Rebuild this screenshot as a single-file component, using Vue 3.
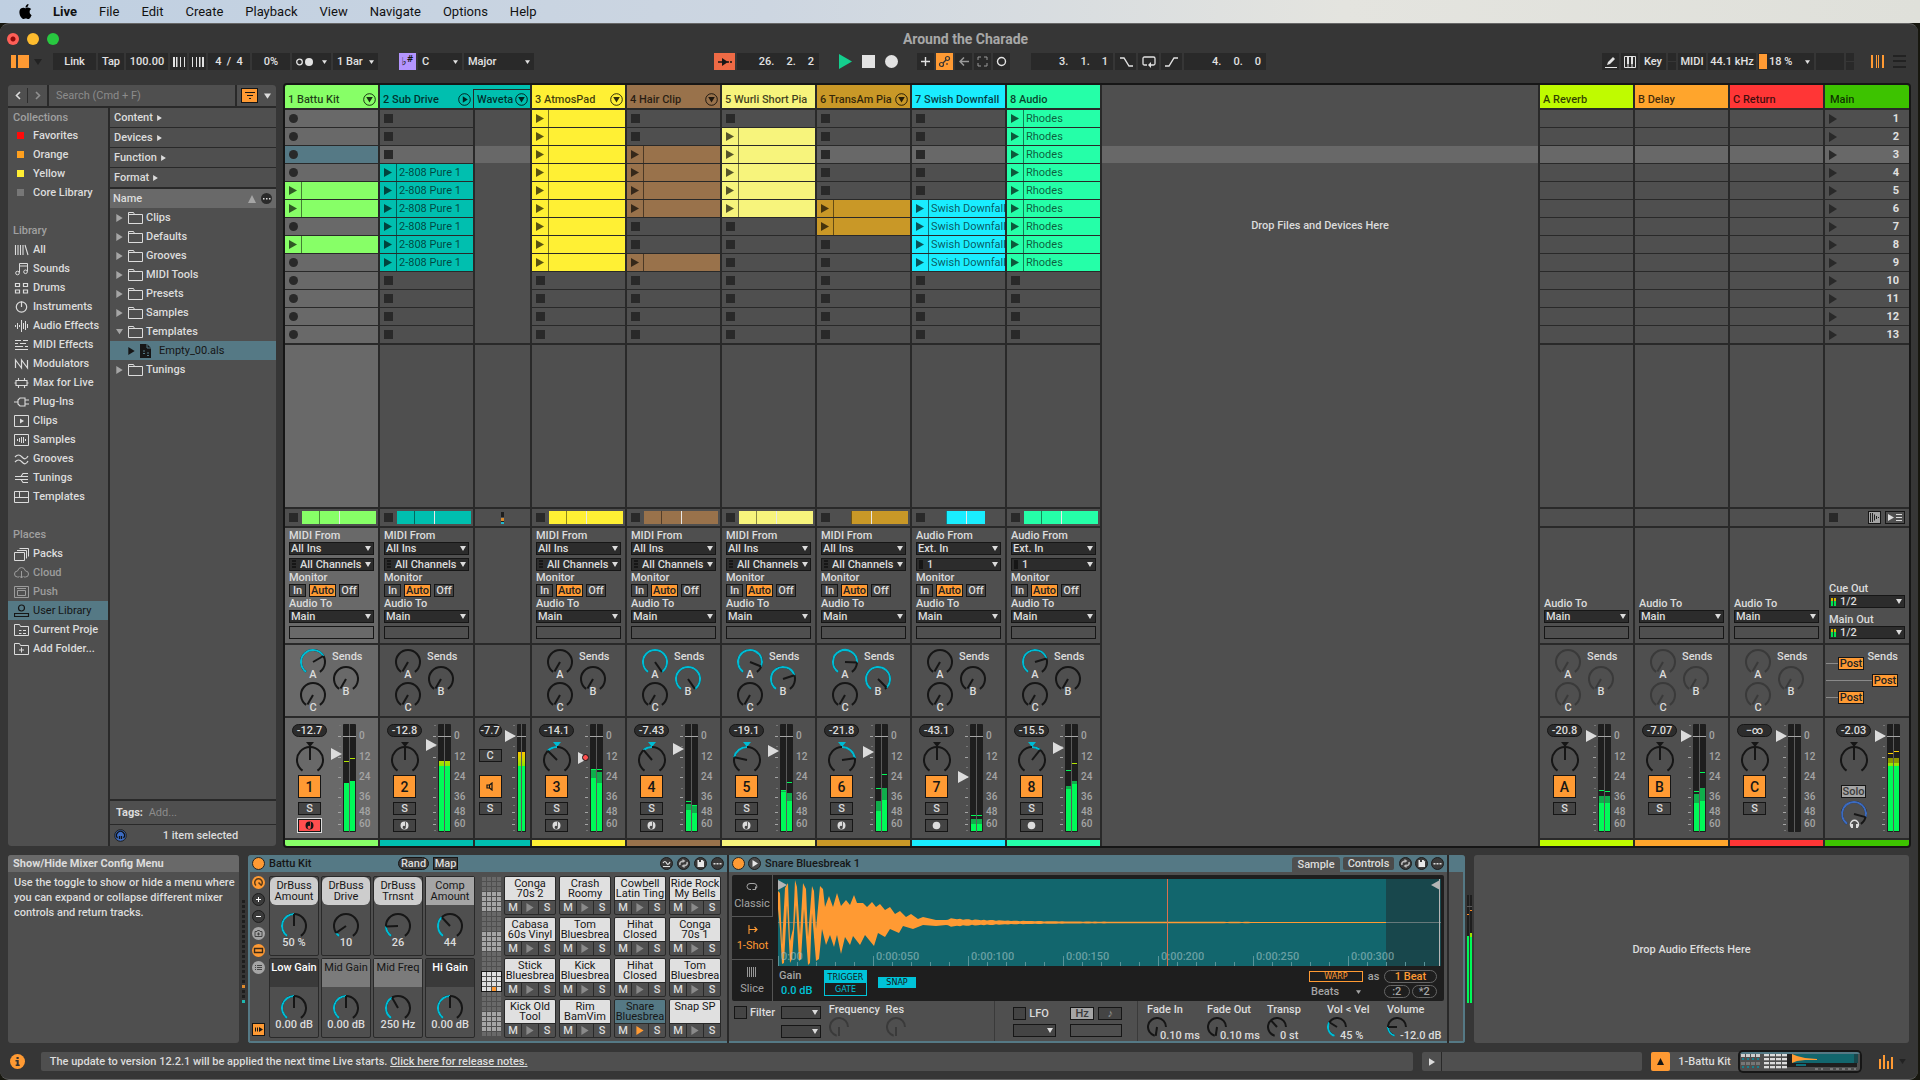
<template>
  <div class="screen">
    <svg class="defs" width="0" height="0" aria-hidden="true">
      <defs>
        <linearGradient id="hot" gradientUnits="userSpaceOnUse" x1="0" y1="43" x2="0" y2="28">
          <stop offset="0" stop-color="#7fe800" />
          <stop offset="0.5" stop-color="#c8d800" />
          <stop offset="1" stop-color="#ffc400" />
        </linearGradient>
      </defs>
    </svg>

    <nav class="menubar">
      <svg class="apple" viewBox="0 0 24 24">
        <path
          d="M12.152 6.896c-.948 0-2.415-1.078-3.96-1.04-2.04.027-3.91 1.183-4.961 3.014-2.117 3.675-.546 9.103 1.519 12.09 1.013 1.454 2.208 3.09 3.792 3.039 1.52-.065 2.09-.987 3.935-.987 1.831 0 2.35.987 3.96.948 1.637-.026 2.676-1.48 3.676-2.948 1.156-1.688 1.636-3.325 1.662-3.415-.039-.013-3.182-1.221-3.22-4.857-.026-3.04 2.48-4.494 2.597-4.559-1.429-2.09-3.623-2.324-4.39-2.376-2-.156-3.675 1.09-4.61 1.09zM15.53 3.83c.843-1.012 1.4-2.427 1.245-3.83-1.207.052-2.662.805-3.532 1.818-.78.896-1.454 2.338-1.273 3.714 1.338.104 2.715-.688 3.559-1.701"
        />
      </svg>
      <a v-for="m in menus" :key="m" href="#" :class="{ app: m === 'Live' }">{{ m }}</a>
    </nav>

    <div class="window">
      <header class="titlebar">
        <div class="lights">
          <button class="light close" aria-label="Close"></button>
          <button class="light min" aria-label="Minimize"></button>
          <button class="light max" aria-label="Zoom"></button>
        </div>
        <h1>Around the Charade</h1>
      </header>

      <!-- transport -->
      <div class="toolbar">
        <div class="tools">
          <button class="bare views" aria-label="Browser"><Icon name="browser" :w="18" :h="14" /></button>
          <button class="bare viewcaret" aria-label="View options"><Icon name="caret" :w="8" :h="6" /></button>
          <button class="cell w43">Link</button>
          <button class="cell w26">Tap</button>
          <button class="cell w42">100.00</button>
          <button class="cell w17" aria-label="Nudge down"><Icon name="nudgeDown" :w="12" :h="10" /></button>
          <button class="cell w17" aria-label="Nudge up"><Icon name="nudgeUp" :w="12" :h="10" /></button>
          <button class="cell w42">4 &nbsp;/ &nbsp;4</button>
          <button class="cell w38">0%</button>
          <button class="cell w39 spread" aria-label="Metronome">
            <Icon name="metro" :w="17" :h="8" /><Icon name="caret" :w="5" :h="4" />
          </button>
          <button class="cell w45 spread">1 Bar <Icon name="caret" :w="5" :h="4" /></button>
          <button class="cell w17 purple" aria-label="Scale mode">♭<sup>#</sup></button>
          <button class="cell w44 spread">C <Icon name="caret" :w="5" :h="4" /></button>
          <button class="cell w70 spread">Major <Icon name="caret" :w="5" :h="4" /></button>
        </div>
        <div class="tools mid">
          <button class="cell w21 follow" aria-label="Follow"><Icon name="follow" :w="16" :h="10" /></button>
          <button class="cell w82 pos"><span>26.</span><span>2.</span><span>2</span></button>
          <div class="transport">
            <button class="bare play" aria-label="Play"><Icon name="play" :w="13" :h="15" /></button>
            <button class="bare" aria-label="Stop"><Icon name="stop" :w="13" :h="13" /></button>
            <button class="bare" aria-label="Record"><Icon name="rec" :w="13" :h="13" /></button>
          </div>
          <button class="cell w17" aria-label="Overdub"><Icon name="plus" :w="11" :h="11" /></button>
          <button class="cell w17 orange" aria-label="Automation arm"><Icon name="auto" :w="13" :h="13" /></button>
          <button class="cell w17 dim" aria-label="Re-enable automation"><Icon name="back" :w="10" :h="9" /></button>
          <button class="cell w17 dim" aria-label="Capture"><Icon name="capture" :w="11" :h="11" /></button>
          <button class="cell w17" aria-label="Session record"><Icon name="ring" :w="11" :h="11" /></button>
          <button class="cell w82 pos gap"><span>3.</span><span>1.</span><span>1</span></button>
          <button class="cell w21" aria-label="Punch in"><Icon name="punchIn" :w="14" :h="10" /></button>
          <button class="cell w21" aria-label="Loop"><Icon name="loop" :w="14" :h="12" /></button>
          <button class="cell w21" aria-label="Punch out"><Icon name="punchOut" :w="14" :h="10" /></button>
          <button class="cell w82 pos"><span>4.</span><span>0.</span><span>0</span></button>
        </div>
        <div class="tools">
          <button class="cell w17" aria-label="Draw"><Icon name="pencil" :w="12" :h="12" /></button>
          <button class="cell w17" aria-label="MIDI keyboard"><Icon name="piano" :w="12" :h="12" /></button>
          <button class="cell w26">Key</button>
          <span class="leds"><i></i><i></i></span>
          <button class="cell w28">MIDI</button>
          <button class="cell w48">44.1 kHz</button>
          <button class="cell w56 cpu"><i></i>18 % <Icon name="caret" :w="5" :h="4" /></button>
          <span class="cell w28"></span>
          <span class="leds"><i></i><i></i></span>
          <button class="bare arr" aria-label="Session view"><Icon name="session" :w="13" :h="13" /></button>
          <button class="bare lines" aria-label="Arrangement view"><Icon name="lines" :w="13" :h="13" /></button>
        </div>
      </div>

      <main class="main">
        <!-- browser -->
        <aside class="browser">
          <div class="search">
            <div class="hist">
              <button aria-label="Back"><Icon name="left" :w="6" :h="9" /></button>
              <button class="off" aria-label="Forward"><Icon name="right" :w="6" :h="9" /></button>
            </div>
            <input type="text" v-model="query" placeholder="Search (Cmd + F)" aria-label="Search" />
            <div class="filter">
              <button class="funnel" aria-label="Filter"><Icon name="funnel" :w="10" :h="7" /></button>
              <button class="bare" aria-label="Filter menu"><Icon name="caret" :w="7" :h="6" /></button>
            </div>
          </div>
          <div class="panes">
            <ul class="side">
              <template v-for="group in sidebar" :key="group.title">
                <li class="group">{{ group.title }}</li>
                <li
                  v-for="it in group.items"
                  :key="it.name"
                  :class="{ active: it.active, faded: it.off }"
                >
                  <span v-if="it.color" class="swatch"><i :style="{ background: it.color }"></i></span>
                  <Icon v-else :name="it.icon" :w="16" :h="14" />
                  {{ it.name }}
                </li>
              </template>
            </ul>
            <div class="files">
              <button v-for="f in ['Content', 'Devices', 'Function', 'Format']" :key="f" class="facet">
                {{ f }} <Icon name="tri" :w="5" :h="6" />
              </button>
              <div class="namebar">
                <span>Name</span>
                <Icon class="sort" name="up" :w="8" :h="8" />
                <Icon name="dots" :w="11" :h="11" />
              </div>
              <ul class="tree">
                <li v-for="n in tree" :key="n.name" :class="{ file: n.file }">
                  <Icon class="arrow" :name="n.open ? 'caret' : 'tri'" :w="7" :h="n.open ? 7 : 8" />
                  <Icon :name="n.file ? 'als' : 'folder'" :w="16" :h="14" />
                  <span>{{ n.name }}</span>
                </li>
              </ul>
              <div class="tags"><b>Tags:</b> Add...</div>
              <div class="count">
                <Icon name="preview" :w="13" :h="13" />
                <span>1 item selected</span>
              </div>
            </div>
          </div>
        </aside>

        <!-- session grid and mixer -->
        <section class="session">
          <template v-for="c in columns" :key="c.name">
            <div v-if="c.kind === 'drop'" class="drop">
              <i class="scene"></i>
              <span>Drop Files and Devices Here</span>
            </div>
            <div v-else class="track" :class="[c.kind, { selected: c.selected }]">
              <div class="head" :style="{ background: c.color }">
                <span>{{ c.name }}</span>
                <Icon v-if="c.fold" :name="c.fold" :w="13" :h="13" />
              </div>
              <div class="slots">
                <template v-if="c.kind === 'track'">
                  <button
                    v-for="(s, i) in c.slots"
                    :key="i"
                    class="slot"
                    :class="{ lit: i === 2, cursor: c.selected && i === 2, clip: s === 'c' }"
                    :style="s === 'c' ? { background: c.color } : null"
                    :aria-label="'Slot ' + (i + 1)"
                  >
                    <span class="ico"><Icon :name="slotIcons[s]" :w="9" :h="9" /></span>
                    <span v-if="s === 'c'" class="label">{{ c.clip }}</span>
                  </button>
                </template>
                <i v-else-if="c.kind === 'chain'" class="scene"></i>
                <template v-else>
                  <div v-for="i in 13" :key="i" class="slot" :class="{ lit: i === 3 }">
                    <template v-if="c.kind === 'master'">
                      <span class="ico dark"><Icon name="tri" :w="8" :h="10" /></span>
                      <b>{{ i }}</b>
                    </template>
                  </div>
                </template>
              </div>
              <div class="blank"></div>
              <div class="status">
                <template v-if="c.kind === 'track'">
                  <i class="sq"></i>
                  <span class="clipview">
                    <span :style="{ background: c.color, left: c.view[0] + 'px', width: c.view[1] + 'px' }"></span>
                    <i class="start" :style="{ left: c.view[2] + 'px' }"></i>
                    <i class="now"></i>
                  </span>
                </template>
                <Icon v-else-if="c.kind === 'chain'" class="mini" name="miniDots" :w="3" :h="12" />
                <template v-else-if="c.kind === 'master'">
                  <i class="sq"></i>
                  <button class="tiny grey" aria-label="Back to arrangement"><Icon name="toArr" :w="9" :h="9" /></button>
                  <button class="tiny wide" aria-label="Scene follow"><Icon name="sceneFollow" :w="14" :h="7" /></button>
                </template>
              </div>

              <div class="io">
                <template v-if="c.kind === 'track'">
                  <p>{{ c.audio ? 'Audio From' : 'MIDI From' }}</p>
                  <span class="sel">
                    <select :aria-label="c.name + ' input'"><option>{{ c.audio ? 'Ext. In' : 'All Ins' }}</option></select>
                  </span>
                  <span class="sel sub" :class="{ mono: c.audio }">
                    <select :aria-label="c.name + ' channel'"><option>{{ c.audio ? '1' : 'All Channels' }}</option></select>
                  </span>
                  <p>Monitor</p>
                  <div class="mon">
                    <button>In</button><button class="on">Auto</button><button>Off</button>
                  </div>
                </template>
                <template v-if="c.kind === 'track' || c.kind === 'return'">
                  <p>Audio To</p>
                  <span class="sel">
                    <select :aria-label="c.name + ' output'"><option>Main</option></select>
                  </span>
                  <span class="box"></span>
                </template>
                <template v-if="c.kind === 'master'">
                  <p>Cue Out</p>
                  <span class="sel out"><select aria-label="Cue out"><option>1/2</option></select></span>
                  <p class="second">Main Out</p>
                  <span class="sel out"><select aria-label="Main out"><option>1/2</option></select></span>
                </template>
              </div>

              <div class="sends">
                <template v-if="c.sends">
                  <div>
                    <div class="send"><Knob v-bind="sendKnob(c, 0)" /><span>A</span></div>
                    <div class="send"><Knob v-bind="sendKnob(c, 2)" /><span>C</span></div>
                  </div>
                  <div>
                    <p>Sends</p>
                    <div class="send"><Knob v-bind="sendKnob(c, 1)" /><span>B</span></div>
                  </div>
                </template>
                <template v-if="c.kind === 'master'">
                  <p>Sends</p>
                  <div class="post"><i></i><button>Post</button></div>
                  <div class="post far"><i></i><button>Post</button></div>
                  <div class="post"><i></i><button>Post</button></div>
                </template>
              </div>

              <div class="mixer">
                <div class="strip">
                  <span class="db">{{ c.db }}</span>
                  <template v-if="c.kind === 'chain'">
                    <button class="sm pan">C</button>
                    <button class="num" aria-label="Chain activator"><Icon name="speaker" :w="8" :h="9" /></button>
                  </template>
                  <template v-else>
                    <svg class="pan-knob" width="28" height="34" viewBox="0 -6 28 34">
                      <path d="M10 -4h8l-4 5z" :fill="c.pan ? '#00bcd4' : '#161616'" />
                      <path :d="arc(-145, 145, 13)" fill="none" stroke="#161616" stroke-width="2" />
                      <path
                        v-if="c.pan"
                        :d="arc(Math.min(0, c.pan), Math.max(0, c.pan), 13)"
                        fill="none"
                        stroke="#00bcd4"
                        stroke-width="2"
                      />
                      <path :d="pointer(c.pan, 13)" stroke="#161616" stroke-width="2" />
                    </svg>
                    <button v-if="c.num" class="num">{{ c.num }}</button>
                  </template>
                  <template v-if="c.kind === 'master'">
                    <button class="solo">Solo</button>
                    <div class="cue">
                      <Knob :angle="105" color="#3c6bc0" />
                      <Icon name="phones" :w="11" :h="11" />
                    </div>
                  </template>
                  <button v-else class="sm">S</button>
                  <button v-if="c.kind === 'track'" class="sm arm" :class="{ armed: c.selected }" aria-label="Arm">
                    <Icon :name="c.audio ? 'armAudio' : 'armMidi'" :w="9" :h="9" />
                  </button>
                </div>
                <div class="fader">
                  <svg width="16" height="108" viewBox="0 0 16 108">
                    <rect
                      v-for="t in ticks"
                      :key="t"
                      :x="scaleMarks[t] ? 11 : 12"
                      :y="t"
                      :width="scaleMarks[t] ? 3 : 2"
                      height="1"
                      :fill="scaleMarks[t] ? '#a5a5a5' : '#777'"
                    />
                  </svg>
                  <i class="thumb" :style="{ top: c.fader - 6 + 'px' }"></i>
                  <i v-if="c.dot" class="dot" :style="{ top: c.fader - 4 + 'px' }"></i>
                </div>
                <svg
                  class="meter"
                  :width="c.kind === 'chain' ? 9 : 13"
                  height="108"
                  :viewBox="c.kind === 'chain' ? '0 0 9 108' : '0 0 13 108'"
                >
                  <rect width="13" height="108" rx="1" fill="#1e1e1e" />
                  <g
                    v-for="(m, i) in c.meter"
                    :key="i"
                    :transform="`translate(${i ? (c.kind === 'chain' ? 5 : 7) : 1} 0)`"
                  >
                    <rect :y="107 - m[1]" :width="barW(c)" :height="m[1]" :fill="m[1] > 65 ? '#8c9600' : '#0fae4b'" />
                    <rect :y="107 - m[0]" :width="barW(c)" :height="m[0]" :fill="m[0] > 65 ? 'url(#hot)' : '#00fa58'" />
                    <rect v-if="m[0] > 65" y="42" :width="barW(c)" height="65" fill="#00fa58" />
                    <rect v-if="m[2]" :y="107 - m[2]" :width="barW(c)" height="1" :fill="peakColor(m[2])" />
                  </g>
                  <rect :x="c.kind === 'chain' ? 4 : 6" width="1" height="108" fill="#5a5a5a" />
                  <rect y="12" width="13" height="1" fill="#a5a5a5" />
                </svg>
                <div v-if="c.kind !== 'chain' && c.kind !== 'master'" class="scale">
                  <span v-for="(label, y) in scaleMarks" :key="y" :style="{ top: y - 6 + 'px' }">{{ label }}</span>
                </div>
              </div>
              <div class="foot" :style="{ background: c.color }"></div>
            </div>
          </template>
        </section>
      </main>

      <!-- detail view -->
      <section class="detail">
        <article class="help">
          <h2>Show/Hide Mixer Config Menu</h2>
          <p>
            Use the toggle to show or hide a menu where<br />you can expand or collapse different mixer<br />controls
            and return tracks.
          </p>
        </article>

        <div class="midi-in">
          <i v-for="n in 21" :key="n" :class="{ o: n === 18, c: n === 21 }"></i>
        </div>

        <div class="chain-view">
          <div class="device rack">
            <header>
              <i class="power"></i>
              <h3>Battu Kit</h3>
              <button class="rand">Rand</button>
              <button class="map">Map</button>
              <div class="round">
                <Icon v-for="n in ['wave', 'swap', 'save', 'dots2']" :key="n" :name="n" :w="13" :h="13" />
              </div>
            </header>
            <div class="rack-body">
              <div class="rack-side">
                <Icon v-for="n in ['macro', 'addc', 'subc', 'cam', 'rackOn', 'list']" :key="n" :name="n" :w="13" :h="13" />
                <Icon class="last" name="autoSel" :w="13" :h="13" />
              </div>
              <div class="macros">
                <div v-for="m in macros" :key="m.name" class="macro">
                  <div class="mname" :class="m.tone"><span>{{ m.name }}</span></div>
                  <Knob :angle="m.angle" />
                  <span class="mval">{{ m.val }}</span>
                </div>
              </div>
              <div class="overview">
                <i v-for="n in 128" :key="n" :class="overviewClass(n - 1)"></i>
                <span class="frame"></span>
              </div>
              <div class="pads">
                <div v-for="(p, i) in pads" :key="i" class="pad" :class="{ active: i === 14 }">
                  <div class="pname">{{ p }}</div>
                  <div class="pbtns">
                    <button>M</button>
                    <button class="pp" aria-label="Preview"><Icon name="tri" :w="8" :h="9" /></button>
                    <button>S</button>
                  </div>
                </div>
              </div>
            </div>
          </div>

          <div class="device simpler">
            <header>
              <i class="power"></i>
              <Icon name="playc" :w="13" :h="13" />
              <h3>Snare Bluesbreak 1</h3>
              <button class="tab on">Sample</button>
              <button class="tab">Controls</button>
              <div class="round">
                <Icon v-for="n in ['swap', 'save', 'dots2']" :key="n" :name="n" :w="13" :h="13" />
              </div>
            </header>
            <div class="sampler">
              <div class="modes">
                <button><Icon name="classic" :w="12" :h="12" />Classic</button>
                <button class="on"><Icon name="shot" :w="12" :h="12" />1-Shot</button>
                <button><Icon name="slice" :w="12" :h="12" />Slice</button>
              </div>
              <div class="sample">
                <svg class="waveform" width="663" height="87" viewBox="0 0 663 87">
                  <rect width="663" height="87" fill="#12666d" />
                  <rect x="608" width="55" height="87" fill="#18474c" />
                  <rect y="43" width="663" height="1" fill="#66797b" />
                  <path :d="wave" fill="#ff9a33" />
                  <g v-for="(t, i) in times" :key="t">
                    <rect :x="i * 95" y="77" width="1" height="10" fill="#5a9499" />
                    <rect v-for="k in 4" :key="k" :x="i * 95 + k * 19" y="83" width="1" height="4" fill="#5a9499" />
                    <text :x="i * 95 + 3" y="81">{{ t }}</text>
                  </g>
                  <path d="M0 1l9 5-9 5z" fill="#b5b5b5" />
                  <path d="M662 1l-9 5 9 5z" fill="#b5b5b5" />
                  <rect x="661" width="1" height="87" fill="#b5b5b5" />
                  <rect x="389" width="1" height="87" fill="#d8704e" />
                </svg>
                <div class="controls">
                  <div class="gain"><span>Gain</span><b>0.0 dB</b></div>
                  <div class="trig"><button class="on">TRIGGER</button><button>GATE</button></div>
                  <button class="snap">SNAP</button>
                  <div class="warp">
                    <button class="wbtn">WARP</button><span>as</span><button class="pill beat">1 Beat</button>
                    <span class="beats">Beats <Icon name="caret" :w="5" :h="4" /></span>
                    <span class="halves"><button class="pill">:2</button><button class="pill">*2</button></span>
                  </div>
                </div>
              </div>
            </div>
            <div class="params">
              <div class="pair filt">
                <label><input type="checkbox" v-model="filterOn" />Filter</label>
              </div>
              <div class="pair selects">
                <span class="sel"><select aria-label="Filter type"><option></option></select></span>
                <span class="sel"><select aria-label="Filter slope"><option></option></select></span>
              </div>
              <div class="param freq"><span>Frequency</span><SmallKnob :angle="-180" :dim="true" /></div>
              <div class="param res"><span>Res</span><SmallKnob :angle="-180" :dim="true" /></div>
              <div class="pair lfo">
                <label><input type="checkbox" v-model="lfoOn" />LFO</label>
                <span class="sel"><select aria-label="LFO shape"><option></option></select></span>
              </div>
              <div class="pair rate">
                <div><button class="hz">Hz</button><button class="note">♪</button></div>
                <span class="box"></span>
              </div>
              <div class="ends">
                <div v-for="p in params" :key="p.name" class="param">
                  <span>{{ p.name }}</span>
                  <div><SmallKnob :angle="p.angle" :fill="p.fill" /><b>{{ p.val }}</b></div>
                </div>
              </div>
            </div>
          </div>

          <div class="device tail"><header></header></div>
        </div>

        <svg class="out-meter" width="5" height="108" viewBox="0 0 5 108">
          <path d="M0 0h2v108h-2zM3 0h2v108h-2z" fill="#1e1e1e" />
          <path d="M0 41h2v67h-2zM3 38h2v70h-2z" fill="#00fa58" />
          <path d="M3 38h2v4h-2z" fill="#9be000" />
          <path d="M0 19h2v1h-2zM3 15h2v1h-2z" fill="#ff8a1f" />
          <path d="M0 11h5v1h-5z" fill="#5a5a5a" />
        </svg>

        <div class="fxdrop">Drop Audio Effects Here</div>
      </section>

      <footer class="statusbar">
        <Icon name="info" :w="15" :h="15" />
        <div class="msg">
          The update to version 12.2.1 will be applied the next time Live starts. <a href="#">Click here for release notes.</a>
        </div>
        <div class="clipbar">
          <button aria-label="Show clip view"><Icon name="tri" :w="6" :h="8" /></button>
          <span></span>
        </div>
        <div class="devbar">
          <button aria-label="Show device view"><Icon name="up" :w="7" :h="7" /></button>
          <span>1-Battu Kit</span>
          <svg class="thumbnail" width="124" height="23" viewBox="0 0 124 23">
            <rect x="1" y="1" width="122" height="21" rx="4" fill="#4f4f4f" />
            <rect x="2" y="2" width="120" height="2" fill="#557985" />
            <g v-for="r in 2" :key="r">
              <template v-for="k in 4" :key="k">
                <rect :x="k * 5 - 2" :y="r * 8 - 4" width="4" height="3" :fill="r === 1 ? '#cdcdcd' : '#777'" />
                <rect :x="k * 5 - 1" :y="r * 8" width="2" height="2" fill="#1b7f8c" />
              </template>
            </g>
            <g v-for="r in 4" :key="'p' + r">
              <template v-for="k in 4" :key="k">
                <rect :x="k * 6 + 20" :y="r * 4" width="5" height="2" fill="#dcdcdc" />
                <rect :x="k * 6 + 20" :y="r * 4 + 2" width="5" height="1" fill="#777" />
              </template>
            </g>
            <rect x="49" y="4" width="70" height="13" fill="#1e1e1e" />
            <rect x="54" y="4" width="62" height="9" fill="#12666d" />
            <rect x="116" y="4" width="4" height="9" fill="#18474c" />
            <path d="M54 4l5 2 8 2 12 1v1l-12 0-8 1-5 2z" fill="#ff9a33" />
            <path d="M58 15h10" stroke="#00bcd4" />
            <path d="M77 19h8M92 19h26" stroke="#a5a5a5" stroke-dasharray="3 3" />
            <rect x="1" y="1" width="122" height="21" rx="4" fill="none" stroke="#161616" stroke-width="2" />
          </svg>
        </div>
        <button class="bare mixbtn" aria-label="Mixer"><Icon name="bars" :w="15" :h="14" /></button>
        <button class="bare mixcaret" aria-label="Mixer config"><Icon name="caret" :w="7" :h="5" /></button>
      </footer>
    </div>
  </div>
</template>

<script setup>
import { h, ref } from 'vue';

const query = ref('');
const filterOn = ref(false);
const lfoOn = ref(false);

const menus = ['Live', 'File', 'Edit', 'Create', 'Playback', 'View', 'Navigate', 'Options', 'Help'];

// [viewBox, markup]; s() draws currentColor strokes, f() fills
const s = (d, w = 1) => `<path d="${d}" fill="none" stroke="currentColor" stroke-width="${w}"/>`;
const f = (d, c = 'currentColor') => `<path d="${d}" fill="${c}" fill-rule="evenodd"/>`;
const disc = (c, ring = '#1e1e1e') => `<circle cx="6.5" cy="6.5" r="6" fill="${c}" stroke="${ring}"/>`;
const o = (cx, cy, r, w = 1) => `<circle cx="${cx}" cy="${cy}" r="${r}" fill="none" stroke="currentColor" stroke-width="${w}"/>`;

const glyphs = {
  browser: ['0 0 18 14', f('M0 0h5v13H0zM7 0h11v13H7z')],
  caret: ['0 0 8 6', f('M0 0h8L4 6z')],
  up: ['0 0 8 8', f('M0 8h8L4 0z')],
  tri: ['0 0 8 10', f('M0 0l8 5-8 5z')],
  left: ['0 0 6 9', s('M5 1L1.5 4.5 5 8', 1.6)],
  right: ['0 0 6 9', s('M1 1l3.5 3.5L1 8', 1.6)],
  nudgeDown: ['0 0 12 10', f('M0 0h2v10H0zM3 0h1.500v10H3zM7 0h1v10H7zM11 0h1v10h-1z')],
  nudgeUp: ['0 0 12 10', f('M0 0h1v10H0zM4 0h1v10H4zM7 0h1.500v10H7zM10 0h2v10h-2z')],
  metro: ['0 0 17 8', o(3.5, 4, 2.8, 1.3) + '<circle cx="13" cy="4" r="4" fill="currentColor"/>'],
  follow: ['0 0 16 10', f('M5 1l6 4-6 4z') + s('M1 5h5M10 5h2M13 5h2', 1.4)],
  play: ['0 0 13 15', f('M0 0l13 7.5L0 15z')],
  stop: ['0 0 13 13', f('M0 0h13v13H0z')],
  rec: ['0 0 13 13', '<circle cx="6.5" cy="6.5" r="6.5" fill="currentColor"/>'],
  plus: ['0 0 11 11', s('M5.5 1v9M1 5.5h9', 1.4)],
  auto: ['0 0 13 13', o(3.5, 9.5, 2, 1.2) + o(9.5, 3.5, 2, 1.2) + o(9, 9, 0.5) + s('M5 8l3-3', 1.2)],
  back: ['0 0 10 9', s('M1 4.500h9M5 0.500l-4 4 4 4', 1.5)],
  capture: ['0 0 11 11', s('M1 4V1h3M7 1h3v3M10 7v3H7M4 10H1V7')],
  ring: ['0 0 11 11', o(5.5, 5.5, 4, 1.4)],
  punchIn: ['0 0 14 10', s('M1 1h4l5 8h4', 1.4)],
  punchOut: ['0 0 14 10', s('M0 9h4l5-8h4', 1.4)],
  loop: ['0 0 14 12', s('M5 9H2.5Q1 9 1 7.5v-5Q1 1 2.5 1h9Q13 1 13 2.5v5Q13 9 11.5 9H8', 1.3) + f('M6 9l3-3v6z')],
  pencil: ['0 0 12 12', f('M2 9l1-3 5-5 2 2-5 5zM0 11h12v1H0z')],
  piano: ['0 0 12 12', s('M0.5 0.5h11v11h-11zM4 7v4M8 7v4') + f('M3 0h2v8H3zM7 0h2v8H7z')],
  session: ['0 0 13 13', f('M0 0h2v13H0zM5 0h1v13H5zM7 0h1v13H7zM11 0h2v13h-2z')],
  lines: ['0 0 13 13', f('M0 0h13v2H0zM0 5h13v2H0zM0 11h13v2H0z')],
  funnel: ['0 0 10 7', f('M0 0h10v1H0zM2 3h6v1H2zM4 6h2v1H4z')],
  // sidebar
  all: ['0 0 16 14', s('M1.5 2v10M4 2v10M6.5 2v10M9 2v10M11 2l3 10', 1.1)],
  sounds: ['0 0 16 14', s('M5.5 10.500V1.500h8v8M5.500 4h8') + o(3.5, 11, 1.8) + o(11.5, 9.8, 1.8)],
  drums: ['0 0 16 14', s('M1.5 2.500h4v3h-4zM9.500 2.500h4v3h-4zM1.500 9h4v3h-4zM9.500 9h4v3h-4z', 1.2)],
  instruments: ['0 0 16 14', o(7.5, 7, 5.2, 1.2) + s('M7.5 1.500V7', 1.2)],
  audiofx: ['0 0 16 14', s('M1.5 6v2M3.5 4v6M5.5 6v2M7.5 1v12M9.5 4v6M11.5 2v9M13.5 5v4')],
  midifx: ['0 0 16 14', s('M1 2.5h6M9 2.5h5M1 5.5h3M6 5.5h6M1 8.5h8M11 8.5h3M1 11.5h13', 1.2)],
  modulators: ['0 0 16 14', s('M1.5 11V3l6 8V3l6 8V3', 1.2)],
  max: ['0 0 16 14', s('M2 4.5h11v5H2zM4.5 2v2.5M10.5 2v2.5M4.5 9.5V12M10.5 9.5V12M0.5 7H2M13 7h1.5', 1.1)],
  plug: ['0 0 16 14', s('M0 7h4M6 3h5v8H6L4 9V5zM11 5h4M11 9h4', 1.1)],
  clips: ['0 0 16 14', s('M0.5 1.5h14v11h-14z') + f('M6 4.5l4 2.5-4 2.5z')],
  samples: ['0 0 16 14', s('M0.5 1.5h14v11h-14zM3.5 6v2M5.5 5v4M7.5 4v6M9.5 4v6M11.5 6v2')],
  grooves: ['0 0 16 14', s('M1 5q3.5-4 7 0t6-1M1 10q3.5-4 7 0t6-1', 1.2)],
  tunings: ['0 0 16 14', s('M14 2.5H9L7 5.5H1M14 5.5H7M14 8.5H7M14 11.5H9l-2-3H1', 1.1)],
  templates: ['0 0 16 14', s('M0.5 1.5h14v11h-14zM5.5 1.5v6M0.5 7.5h14')],
  packs: ['0 0 16 14', s('M0.5 5.5h10v8h-10zM3 3.5h9.5v8M5.5 1.5h9v8')],
  cloud: ['0 0 16 14', s('M5 11H3.500a3 3 0 010-6q1-3.500 4-3.500T11.500 5a3 3 0 010 6H10M7.500 5v7M5.500 10l2 2 2-2')],
  push: ['0 0 16 14', s('M0.5 1.5h14v11h-14zM3 3.5h9M3.5 5.5h8v5h-8z')],
  user: ['0 0 16 14', o(7.5, 4, 3, 1.2) + s('M0.5 12.5V9.5h14v3z', 1.2)],
  project: ['0 0 16 14', s('M0.5 12.5v-11h5l1 2h8v9zM5 7.500h2.500M9 7.500h3M5 10.500h2.500M9 10.500h3')],
  addfolder: ['0 0 16 14', s('M0.5 12.5v-11h5l1 2h8v9zM7.5 5.5v5M5 8h5')],
  folder: ['0 0 16 14', s('M0.5 12.5v-11h5l1 2h8v9zM1 3.5h6')],
  als: ['0 0 16 14', f('M2 0h7l4 4v10H2z') + '<path d="M9 0v4h4M5 7h2M5 9.5h2M9 9h2M9 11.5h2" fill="none" stroke="#557985"/>'],
  dots: ['0 0 11 11', '<circle cx="5.5" cy="5.5" r="5.5" fill="#2a2a2a"/><path d="M2 5h1.500v1.500H2zM5 5h1.500v1.500H5zM8 5h1.500v1.500H8z" fill="#ddd"/>'],
  preview: ['0 0 13 13', '<circle cx="6.5" cy="6.5" r="5.8" fill="#3c6bc0" stroke="#1e1e1e"/><path d="M3.5 9a4 4 0 116 0M5.500 7v3M7.500 7v3" fill="none" stroke="#111" stroke-width="1.3"/>'],
  // session
  foldDown: ['0 0 13 13', o(6.5, 6.5, 5.8) + f('M3.2 4h6.600L6.500 9.500z')],
  foldRight: ['0 0 13 13', o(6.5, 6.5, 5.8) + f('M4.8 3.200v6.600L9.800 6.500z')],
  slotStop: ['0 0 9 9', f('M0 0h9v9H0z')],
  slotRec: ['0 0 9 9', '<circle cx="4.5" cy="4.5" r="4.5" fill="currentColor"/>'],
  slotPlay: ['0 0 9 9', f('M0 0l8 4.5L0 9z')],
  miniDots: ['0 0 3 12', '<path d="M0 0h3v5H0zM0 9h3v1H0z" fill="#1e1e1e"/><path d="M0 6h3v3H0z" fill="#d98a2e"/><path d="M0 10h3v2H0z" fill="#1fb7c9"/>'],
  toArr: ['0 0 9 9', f('M0 0h1v9H0zM2 0h1v9H2zM4 1l1 1v5l-1 1zM6 3h1v3H6zM8 4h1v1H8z', '#222')],
  sceneFollow: ['0 0 14 7', f('M0 0l6 3.5L0 7zM8 0h6v1H8zM8 3h6v1H8zM8 6h6v1H8z')],
  speaker: ['0 0 8 9', s('M1 3h2.5v3H1zM3.5 3L6 1v7L3.5 6', 1.2)],
  armMidi: ['0 0 9 9', f('M4.5 0.500a4 4 0 010 8a4 4 0 010-8zM5 1v4a1.600 1.600 0 10.800 1.300V1z')],
  armAudio: ['0 0 9 9', '<circle cx="4.5" cy="4.5" r="3.8" fill="currentColor"/>'],
  phones: ['0 0 11 11', s('M2.5 9A4 4 0 118.500 9', 1.5) + f('M2 6h2v4H2zM7 6h2v4H7z')],
  // devices
  wave: ['0 0 13 13', disc('#3a3a3a') + '<path d="M3 6q2-3 3.5 0T10 5M3 9.5h7" fill="none" stroke="#e0e0e0" stroke-width="1.2"/>'],
  swap: ['0 0 13 13', disc('#3a3a3a') + '<path d="M3 8q-1-3 3-4M10 5q1 3-3 4" fill="none" stroke="#bbb" stroke-width="1.6"/><path d="M5.5 2l3 2-3 2zM7.5 7l-3 2 3 2z" fill="#bbb"/>'],
  save: ['0 0 13 13', disc('#3a3a3a') + '<path d="M3.5 3h5l1.500 1.500V10h-6.500z" fill="#e8e8e8"/><path d="M5 3h2v2H5z" fill="#3a3a3a"/>'],
  dots2: ['0 0 13 13', disc('#3a3a3a') + '<path d="M2.5 6h2v1.500h-2zM5.500 6h2v1.500h-2zM8.500 6h2v1.500h-2z" fill="#ddd"/>'],
  playc: ['0 0 13 13', disc('#4a4a4a') + '<path d="M4.5 3v7l5.500-3.500z" fill="#e8e8e8"/>'],
  macro: ['0 0 13 13', '<circle cx="6.5" cy="6.5" r="6.5" fill="#ff9a33"/><path d="M4 9.5a3.800 3.800 0 115 0M6.500 6.500L9.500 9.500" fill="none" stroke="#5a3a18" stroke-width="1.5"/>'],
  addc: ['0 0 13 13', disc('#3a3a3a') + '<path d="M6.5 4v5M4 6.500h5" stroke="#fff"/>'],
  subc: ['0 0 13 13', disc('#3a3a3a') + '<path d="M4 6.5h5" stroke="#fff"/>'],
  cam: ['0 0 13 13', '<circle cx="6.5" cy="6.5" r="6.5" fill="#a5a5a5"/><path d="M3 4.5h2l.5-1h2l.5 1h2v5H3zM6.500 5.500v3M5 7h3" fill="none" stroke="#444"/>'],
  rackOn: ['0 0 13 13', '<circle cx="6.5" cy="6.5" r="6.5" fill="#ff9a33"/><path d="M2.5 4.500h8v4h-8z" fill="none" stroke="#3a2a18" stroke-width="1.4"/>'],
  list: ['0 0 13 13', '<circle cx="6.5" cy="6.5" r="6.5" fill="#a5a5a5"/><path d="M5 4.500h5M5 6.500h5M5 8.500h5M3 4.500h1M3 6.500h1M3 8.500h1" stroke="#444"/>'],
  autoSel: ['0 0 13 13', '<rect x=".5" y=".5" width="12" height="12" fill="#ff9a33" stroke="#161616"/><path d="M3 4.5h1v4H3zM5 4.500h1v4H5zM7 4l4 2.500L7 9z" fill="#161616"/>'],
  classic: ['0 0 12 12', s('M5 8.500H4a3 3 0 010-6h4a3 3 0 011 5.800M6.500 8.500h3v-3')],
  shot: ['0 0 12 12', s('M2 2v9M2 6.5h8M7.5 4L10 6.5 7.5 9', 1.1)],
  slice: ['0 0 12 12', s('M1.5 1v10M3.5 1v10M5.5 1v10M7.5 1v10M9.5 1v10', 0.9)],
  info: ['0 0 15 15', '<circle cx="7.5" cy="7.5" r="7.5" fill="#ff9a33"/><path d="M6.5 3h2.200v2H6.500zM5.500 6h3.200v4.500h1V12h-4v-1.500h1V7.500h-1.200z" fill="#333"/>'],
  bars: ['0 0 15 14', f('M0 4h2v10H0zM4 0h2v14H4zM8 6h2v8H8zM12 2h2v12h-2z')],
};

const Icon = (p) =>
  h('svg', { width: p.w, height: p.h, viewBox: glyphs[p.name][0], innerHTML: glyphs[p.name][1], 'aria-hidden': 'true' });
Icon.props = ['name', 'w', 'h'];

// 0 degrees is straight up, clockwise
const polar = (deg, r, c = 14) => {
  const a = (deg * Math.PI) / 180;
  return `${(c + r * Math.sin(a)).toFixed(2)} ${(c - r * Math.cos(a)).toFixed(2)}`;
};
const arc = (from, to, r, c = 14) =>
  `M${polar(from, r, c)}A${r} ${r} 0 ${to - from > 180 ? 1 : 0} 1 ${polar(to, r, c)}`;
const pointer = (deg, r, c = 14) => `M${c} ${c}L${polar(deg || 0, r, c)}`;

const stroke = (d, color) => h('path', { d, fill: 'none', stroke: color, 'stroke-width': 2 });

const Knob = (p) => {
  const ink = p.dim ? '#3a3a3a' : '#161616';
  return h('svg', { width: 28, height: 28, viewBox: '0 0 28 28' }, [
    stroke(arc(-145, 145, 12), ink),
    p.angle > -145 ? stroke(arc(-145, p.angle, 12), p.color || '#00bcd4') : null,
    stroke(pointer(p.angle, p.angle > -145 ? 12 : 11), ink),
  ]);
};
Knob.props = ['angle', 'color', 'dim'];

const SmallKnob = (p) => {
  const ink = p.dim ? '#3a3a3a' : '#161616';
  return h('svg', { width: 20, height: 20, viewBox: '0 0 20 20' }, [
    stroke(arc(-165, 90, 9, 10), ink),
    p.fill ? stroke(arc(-165, p.angle, 9, 10), '#00bcd4') : null,
    stroke(pointer(p.angle, 9, 10), ink),
  ]);
};
SmallKnob.props = ['angle', 'fill', 'dim'];

const sidebar = [
  {
    title: 'Collections',
    items: [
      { name: 'Favorites', color: '#ff0a0a' },
      { name: 'Orange', color: '#ffa01e' },
      { name: 'Yellow', color: '#ffee33' },
      { name: 'Core Library', color: '#777' },
    ],
  },
  {
    title: 'Library',
    items: [
      { name: 'All', icon: 'all' },
      { name: 'Sounds', icon: 'sounds' },
      { name: 'Drums', icon: 'drums' },
      { name: 'Instruments', icon: 'instruments' },
      { name: 'Audio Effects', icon: 'audiofx' },
      { name: 'MIDI Effects', icon: 'midifx' },
      { name: 'Modulators', icon: 'modulators' },
      { name: 'Max for Live', icon: 'max' },
      { name: 'Plug-Ins', icon: 'plug' },
      { name: 'Clips', icon: 'clips' },
      { name: 'Samples', icon: 'samples' },
      { name: 'Grooves', icon: 'grooves' },
      { name: 'Tunings', icon: 'tunings' },
      { name: 'Templates', icon: 'templates' },
    ],
  },
  {
    title: 'Places',
    items: [
      { name: 'Packs', icon: 'packs' },
      { name: 'Cloud', icon: 'cloud', off: true },
      { name: 'Push', icon: 'push', off: true },
      { name: 'User Library', icon: 'user', active: true },
      { name: 'Current Proje', icon: 'project' },
      { name: 'Add Folder...', icon: 'addfolder' },
    ],
  },
];

const tree = [
  { name: 'Clips' },
  { name: 'Defaults' },
  { name: 'Grooves' },
  { name: 'MIDI Tools' },
  { name: 'Presets' },
  { name: 'Samples' },
  { name: 'Templates', open: true },
  { name: 'Empty_00.als', file: true },
  { name: 'Tunings' },
];

const slotIcons = { s: 'slotStop', r: 'slotRec', c: 'slotPlay' };

const off = -150;
// meter rows: [level, recent level, peak] for left and right
const columns = [
  {
    kind: 'track', name: '1 Battu Kit', color: '#87ff67', fold: 'foldDown', selected: true, slots: 'rrrrccrcrrrrr',
    view: [0, 74, 17], sends: [60, off, off], db: '-12.7', pan: 0, num: '1', fader: 30,
    meter: [[48, 48, 70], [50, 50, 73]],
  },
  {
    kind: 'track', name: '2 Sub Drive', color: '#00bfaf', fold: 'foldRight', clip: '2-808 Pure 1', slots: 'sssccccccssss',
    view: [0, 74, 17], sends: [off, off, off], db: '-12.8', pan: 0, num: '2', fader: 21,
    meter: [[70, 70, 0], [70, 70, 0]],
  },
  {
    kind: 'chain', name: 'Waveta', color: '#00bfaf', fold: 'foldDown', db: '-7.7', fader: 12,
    meter: [[79, 79, 0], [79, 79, 0]],
  },
  {
    kind: 'track', name: '3 AtmosPad', color: '#fff034', fold: 'foldDown', slots: 'cccccccccssss',
    view: [0, 74, 17], sends: [off, off, off], db: '-14.1', pan: -45, num: '3', fader: 34, dot: true,
    meter: [[53, 61, 62], [48, 59, 62]],
  },
  {
    kind: 'track', name: '4 Hair Clip', color: '#99724b', fold: 'foldDown', slots: 'ssccccsscssss',
    view: [0, 74, 17], sends: [145, 145, off], db: '-7.43', pan: -40, num: '4', fader: 25,
    meter: [[21, 27, 30], [18, 25, 26]],
  },
  {
    kind: 'track', name: '5 Wurli Short Pia', color: '#f7f47c', slots: 'scccccsssssss',
    view: [0, 74, 17], sends: [112, 72, off], db: '-19.1', pan: -78, num: '5', fader: 27,
    meter: [[39, 40, 41], [30, 38, 49]],
  },
  {
    kind: 'track', name: '6 TransAm Pia', color: '#c99827', fold: 'foldDown', slots: 'sssssccssssss',
    view: [17, 57, 17], sends: [92, 135, off], db: '-21.8', pan: 82, num: '6', fader: 28,
    meter: [[20, 30, 43], [31, 43, 57]],
  },
  {
    kind: 'track', name: '7 Swish Downfall', color: '#1aedff', audio: true, clip: 'Swish Downfall', slots: 'sssssccccssss',
    view: [17, 39, 17], sends: [off, off, off], db: '-43.1', pan: 0, num: '7', fader: 53,
    meter: [[7, 12, 16], [7, 12, 16]],
  },
  {
    kind: 'track', name: '8 Audio', color: '#25ffa8', audio: true, clip: 'Rhodes', slots: 'cccccccccssss',
    view: [0, 74, 17], sends: [73, off, off], db: '-15.5', pan: 38, num: '8', fader: 24,
    meter: [[42, 45, 61], [47, 50, 68]],
  },
  { kind: 'drop', name: 'drop' },
  {
    kind: 'return', name: 'A Reverb', color: '#bffb00', sends: [off, off, off], db: '-20.8', pan: 0, num: 'A', fader: 12,
    meter: [[28, 35, 41], [28, 35, 40]],
  },
  {
    kind: 'return', name: 'B Delay', color: '#ffa52c', sends: [off, off, off], db: '-7.07', pan: 0, num: 'B', fader: 12,
    meter: [[28, 37, 40], [30, 43, 59]],
  },
  {
    kind: 'return', name: 'C Return', color: '#ff3636', sends: [off, off, off], db: '−∞', pan: 0, num: 'C', fader: 12,
    meter: [],
  },
  {
    kind: 'master', name: 'Main', color: '#3dc300', db: '-2.03', pan: 0, fader: 12,
    meter: [[68, 73, 78], [68, 73, 80]],
  },
];

const sendKnob = (c, i) => ({ angle: c.sends[i], dim: c.kind === 'return' });

const ticks = [1, 12, 22, 33, 43, 53, 64, 73, 81, 88, 95, 100, 106];
const scaleMarks = { 12: '0', 33: '12', 53: '24', 73: '36', 88: '48', 100: '60' };
const barW = (c) => (c.kind === 'chain' ? 3 : 5);
const peakColor = (v) => (v > 76 ? '#ffd000' : v > 66 ? '#b4e600' : '#00fa58');

const macros = [
  { name: 'DrBuss Amount', val: '50 %', angle: 0, tone: 'light' },
  { name: 'DrBuss Drive', val: '10', angle: -125, tone: 'light' },
  { name: 'DrBuss Trnsnt', val: '26', angle: -92, tone: 'light' },
  { name: 'Comp Amount', val: '44', angle: -43, tone: 'grey' },
  { name: 'Low Gain', val: '0.00 dB', angle: 0, tone: 'dark' },
  { name: 'Mid Gain', val: '0.00 dB', angle: 0, tone: 'mid' },
  { name: 'Mid Freq', val: '250 Hz', angle: -30, tone: 'mid' },
  { name: 'Hi Gain', val: '0.00 dB', angle: 0, tone: 'dark' },
];

const pads = [
  'Conga 70s 2', 'Crash Roomy', 'Cowbell Latin Ting', 'Ride Rock My Bells',
  'Cabasa 60s Vinyl', 'Tom Bluesbrea', 'Hihat Closed', 'Conga 70s 1',
  'Stick Bluesbrea', 'Kick Bluesbrea', 'Hihat Closed', 'Tom Bluesbrea',
  'Kick Old Tool', 'Rim BamVim', 'Snare Bluesbrea', 'Snap SP',
];

const overviewClass = (i) => {
  const row = Math.floor(i / 4);
  if (row >= 19 && row <= 22) return i === 90 ? 'hit' : 'cur';
  return [3, 11, 27].some((r) => row >= r && row < r + 4) ? 'used' : '';
};

const params = [
  { name: 'Fade In', val: '0.10 ms', angle: -172 },
  { name: 'Fade Out', val: '0.10 ms', angle: -172 },
  { name: 'Transp', val: '0 st', angle: -42 },
  { name: 'Vol < Vel', val: '45 %', angle: -58, fill: true },
  { name: 'Volume', val: '-12.0 dB', angle: -90, fill: true },
];

const times = ['0:00', '0:00:050', '0:00:100', '0:00:150', '0:00:200', '0:00:250', '0:00:300'];

// drum hit outline: hand-placed attack, then a decaying tail
const upper = [
  [0, 12], [2, 14], [4, 66], [7, 9], [10, 4], [12, 62], [15, 50], [17, 1], [19, 8], [22, 56], [25, 4], [28, 10],
  [30, 58], [34, 7], [36, 12], [38, 50], [42, 7], [45, 10], [47, 28], [51, 17], [55, 28], [59, 14], [63, 27],
  [68, 21], [72, 26], [76, 16], [79, 24], [85, 24], [89, 28], [94, 23], [98, 28], [102, 25], [107, 31], [112, 28],
  [117, 35], [122, 32], [128, 38], [133, 35], [140, 40], [145, 38], [158, 41], [168, 41],
];
const lower = [
  [168, 46], [158, 47], [145, 46], [135, 50], [125, 47], [121, 54], [112, 50], [107, 58], [100, 54], [96, 67],
  [87, 56], [82, 66], [75, 57], [72, 66], [67, 58], [63, 75], [59, 56], [56, 68], [52, 56], [48, 66], [44, 50],
  [41, 80], [38, 82], [34, 34], [32, 84], [30, 86], [26, 30], [23, 80], [21, 82], [18, 26], [14, 80], [12, 84],
  [9, 26], [6, 84], [4, 85], [2, 50], [0, 30],
];
const tail = [];
for (let x = 170; x <= 608; x += 3) {
  const amp = 0.6 + 4 * Math.exp(-(x - 170) / 60) * (0.55 + 0.45 * Math.abs(Math.sin(x * 1.7)));
  tail.push([x, amp]);
}
const wave =
  'M' +
  [...upper, ...tail.map(([x, a]) => [x, 43.5 - a]), ...tail.reverse().map(([x, a]) => [x, 43.5 + a]), ...lower]
    .map((p) => p.join(' '))
    .join('L') +
  'Z';
</script>

<style>
html,
body {
  background: #17170f;
}
</style>

<style scoped>
.screen {
  min-height: 100vh;
  display: flex;
  flex-direction: column;
  font-family: Roboto, 'Liberation Sans', sans-serif;
  font-size: 11px;
  font-weight: 500;
  color: #dcdcdc;
  cursor: default;
}

.screen * {
  box-sizing: border-box;
}

.defs {
  position: absolute;
}

svg {
  display: block;
  flex: none;
}

h1,
h2,
h3,
p,
ul {
  margin: 0;
  padding: 0;
  list-style: none;
  font-size: 11px;
}

i {
  display: block;
}

button,
input,
select {
  font: inherit;
  color: inherit;
  border: 0;
  padding: 0;
  margin: 0;
  background: none;
  border-radius: 0;
}

button {
  display: flex;
  align-items: center;
  justify-content: center;
  white-space: nowrap;
}

/* system menu bar */
.menubar {
  height: 23px;
  display: flex;
  align-items: center;
  gap: 22px;
  padding-left: 18px;
  background: linear-gradient(to right, #bfcfe1, #cdd6e1 40%, #e4e4df 70%, #dfe0da);
  font-size: 13px;
  font-weight: 400;
}

.menubar a {
  color: #111;
  text-decoration: none;
}

.menubar a.app {
  margin-left: -2px;
  font-weight: 700;
}

.apple {
  width: 15px;
  height: 15px;
}

.window {
  flex: 1;
  display: flex;
  flex-direction: column;
  margin-right: 2px;
  background: #363636;
  border-top: 1px solid #666;
  border-bottom: 1px solid #666;
  border-radius: 9px;
}

.titlebar {
  height: 29px;
  display: grid;
  grid-template-columns: 1fr auto 1fr;
  align-items: center;
  padding: 0 0 0 7px;
}

.titlebar h1 {
  padding-left: 6px;
  font-size: 14px;
  color: #a8a8a8;
}

.lights {
  display: flex;
  gap: 8px;
}

.light {
  width: 12px;
  height: 12px;
  border-radius: 6px;
}

.close {
  background: radial-gradient(circle, #8c0a0a 2px, #ff5f57 3px);
}

.min {
  background: #febc2e;
}

.max {
  background: #28c840;
}

/* transport bar */
.toolbar {
  display: flex;
  justify-content: space-between;
  padding: 0 12px 0 11px;
  color: #e2e2e2;
}

.tools {
  display: flex;
  align-items: center;
  gap: 2px;
}

.mid {
  margin-right: 156px;
}

.cell {
  height: 17px;
  background: #292929;
}

.w17 { width: 17px; }
.w21 { width: 21px; }
.w26 { width: 26px; }
.w28 { width: 28px; }
.w38 { width: 38px; }
.w39 { width: 39px; }
.w42 { width: 42px; }
.w43 { width: 43px; }
.w44 { width: 44px; }
.w45 { width: 45px; }
.w48 { width: 48px; }
.w56 { width: 56px; }
.w70 { width: 70px; }
.w82 { width: 82px; }

.views,
.arr {
  color: #ff9a33;
}

.viewcaret {
  color: #222;
  margin: 0 9px 0 3px;
}

.spread {
  justify-content: space-between;
  padding: 0 4px;
}

.purple {
  background: #b495ff;
  color: #161616;
  margin-left: 19px;
  font-family: 'DejaVu Sans', sans-serif;
}

.purple sup {
  font-size: 8px;
  line-height: 8px;
  margin-bottom: 4px;
  font-weight: 700;
}

.follow {
  background: #ee6a45;
  color: #161616;
}

.orange {
  background: #ff9a33;
  color: #333;
}

.dim {
  color: #999;
}

.pos {
  justify-content: flex-end;
  gap: 12px;
  padding-right: 5px;
}

.transport {
  display: flex;
  align-items: center;
  gap: 10px;
  margin: 0 17px 0 18px;
}

.play {
  color: #14cf8e;
}

.gap {
  margin-left: 19px;
}

.leds {
  display: flex;
  flex-direction: column;
  gap: 1px;
}

.leds i {
  width: 8px;
  height: 8px;
  background: #292929;
}

.cpu {
  justify-content: flex-start;
  padding: 0 4px 0 1px;
}

.cpu i {
  width: 8px;
  height: 15px;
  margin-right: 2px;
  background: #ff9a33;
}

.cpu svg {
  margin-left: auto;
}

.arr {
  margin-left: 15px;
}

.lines {
  margin-left: 7px;
  color: #222;
}

.main {
  flex: 1;
  display: flex;
  gap: 7px;
  padding: 0 7px 0 8px;
  margin-top: 13px;
}

/* browser */
.browser {
  width: 268px;
  flex: none;
  display: flex;
  flex-direction: column;
  gap: 2px;
  margin: 2px 0;
  background: #292929;
  border-radius: 3px;
  overflow: hidden;
}

.search {
  display: flex;
  gap: 2px;
  height: 21px;
}

.hist,
.filter,
.search input {
  background: #4f4f4f;
}

.hist {
  width: 39px;
  display: flex;
  align-items: center;
}

.hist button {
  flex: 1;
  height: 15px;
}

.hist .off {
  border-left: 1px solid #2c2c2c;
  color: #909090;
}

.search input {
  flex: 1;
  min-width: 0;
  padding-left: 7px;
  outline: none;
}

.search input::placeholder {
  color: #8c8c8c;
  font-weight: 400;
}

.filter {
  width: 39px;
  display: flex;
  align-items: center;
  gap: 6px;
  padding-left: 4px;
}

.funnel {
  width: 17px;
  height: 15px;
  background: #ff9a33;
  border: 1px solid #161616;
  color: #161616;
}

.panes {
  flex: 1;
  display: flex;
  gap: 2px;
}

.side,
.files {
  background: #4f4f4f;
}

.side {
  width: 100px;
}

.side li {
  height: 19px;
  display: flex;
  align-items: center;
  gap: 3px;
  padding-left: 6px;
  white-space: nowrap;
}

.side .group {
  padding-left: 5px;
  color: #a0a0a0;
}

.side .group:first-child {
  height: 18px;
}

.side li + .group {
  margin-top: 19px;
}

.side .active {
  color: #161616;
  font-weight: 400;
  background: #557985;
}

.side .faded {
  color: #9c9c9c;
}

.swatch {
  width: 16px;
  padding-left: 3px;
}

.swatch i {
  width: 7px;
  height: 7px;
}

.files {
  flex: 1;
  display: flex;
  flex-direction: column;
}

.facet {
  height: 20px;
  justify-content: flex-start;
  gap: 4px;
  padding-left: 4px;
  border-bottom: 1px solid #292929;
}

.namebar {
  height: 20px;
  display: flex;
  align-items: center;
  gap: 5px;
  padding: 0 4px 0 3px;
  background: #696969;
  border-top: 1px solid #292929;
}

.namebar .sort {
  margin-left: auto;
  color: #a5a5a5;
}

.tree {
  flex: 1;
}

.tree li {
  height: 19px;
  display: flex;
  align-items: center;
  padding-left: 6px;
}

.tree .arrow {
  margin-right: 5px;
  color: #a5a5a5;
}

.tree span {
  margin-left: 2px;
}

.tree .file {
  padding-left: 18px;
  background: #557985;
  color: #161616;
  font-weight: 400;
}

.tree .file .arrow {
  margin-right: 3px;
  color: #161616;
}

.tree .file span {
  margin-left: 5px;
}

.tags {
  height: 25px;
  padding-left: 6px;
  line-height: 24px;
  border-top: 2px solid #292929;
  color: #8c8c8c;
  font-weight: 400;
}

.tags b {
  color: #dcdcdc;
  margin-right: 3px;
}

.count {
  height: 22px;
  display: flex;
  align-items: center;
  padding-left: 4px;
  border-top: 1px solid #292929;
}

.count span {
  flex: 1;
  text-align: center;
  padding-right: 2px;
}

/* session view */
.session {
  flex: 1;
  display: flex;
  gap: 2px;
  border: 2px solid #161616;
  border-radius: 4px;
  background: #292929;
  overflow: hidden;
}

.track {
  width: 93px;
  flex: none;
  display: flex;
  flex-direction: column;
  gap: 2px;
}

.track.master {
  width: 84px;
}

.track.chain {
  width: 55px;
}

.head {
  height: 23px;
  display: flex;
  align-items: flex-end;
  justify-content: space-between;
  padding: 0 2px 2px 3px;
  line-height: 13px;
  color: rgba(0, 0, 0, 0.75);
  white-space: nowrap;
}

.head svg {
  color: rgba(0, 0, 0, 0.8);
}

.master .head {
  padding-left: 5px;
}

.chain .head {
  position: relative;
  margin-left: -2px;
  padding-left: 4px;
}

.chain .head::before {
  content: '';
  position: absolute;
  inset: 4px 0 0;
  border: solid #292929;
  border-width: 1px 0 0 1px;
}

.slots {
  height: 233px;
  display: flex;
  flex-direction: column;
  gap: 1px;
}

.slot {
  height: 17px;
  display: flex;
  align-items: center;
  justify-content: flex-start;
  background: #4f4f4f;
  color: #292929;
}

.selected .slot {
  background: #696969;
}

.slot.lit {
  background: #686868;
}

.slot.cursor {
  background: #557985;
}

.slot .ico {
  width: 17px;
  height: 17px;
  display: flex;
  flex: none;
  align-items: center;
  padding-left: 4px;
}

.clip {
  color: rgba(0, 0, 0, 0.65);
}

.clip .ico {
  border-right: 1px solid rgba(0, 0, 0, 0.5);
}

.slot .label {
  padding-left: 2px;
  font-weight: 400;
}

.slot b {
  flex: 1;
  padding-right: 10px;
  text-align: right;
  color: #e0e0e0;
}

.chain .slots,
.drop {
  background: #4f4f4f;
}

.scene {
  height: 17px;
  margin-top: 36px;
  background: #686868;
}

.drop {
  flex: 1;
  padding-top: 25px;
  text-align: center;
  white-space: nowrap;
}

.drop span {
  display: block;
  margin-top: 56px;
}

.blank {
  flex: 1;
  min-height: 60px;
}

.blank,
.status,
.io,
.sends,
.mixer {
  background: #4f4f4f;
}

.selected .blank,
.selected .io,
.selected .sends,
.selected .mixer {
  background: #696969;
}

.status {
  height: 17px;
  display: flex;
  align-items: center;
  padding-left: 4px;
}

.sq {
  width: 9px;
  height: 9px;
  background: #292929;
}

.clipview {
  position: relative;
  width: 74px;
  height: 13px;
  margin-left: 4px;
}

.clipview span,
.clipview i {
  position: absolute;
  top: 0;
  height: 13px;
}

.clipview .start {
  width: 1px;
  background: rgba(0, 0, 0, 0.45);
}

.clipview .now {
  left: 37px;
  width: 1px;
  background: #e8e8e8;
}

.mini {
  margin-left: 22px;
}

.tiny {
  width: 13px;
  height: 13px;
  border: 1px solid #161616;
  margin-left: 4px;
}

.tiny.grey {
  background: #a5a5a5;
  margin-left: 30px;
}

.tiny.wide {
  width: 20px;
}

/* in / out routing */
.io {
  height: 115px;
  display: flex;
  flex-direction: column;
  justify-content: flex-end;
  padding: 0 4px 4px;
}

.io p {
  height: 13px;
  line-height: 13px;
}

.sel {
  position: relative;
  display: block;
  height: 13px;
  background: #2c2c2c;
  border: 1px solid #161616;
}

.sel::after {
  content: '';
  position: absolute;
  top: 3px;
  right: 2px;
  border: solid transparent;
  border-width: 5px 3px 0;
  border-top-color: #dcdcdc;
  pointer-events: none;
}

.sel select {
  display: block;
  width: 100%;
  height: 11px;
  padding-left: 1px;
  line-height: 11px;
  appearance: none;
  outline: none;
}

.sel.sub {
  margin-top: 3px;
}

.sel.sub select {
  padding-left: 10px;
}

.sel.sub::before {
  content: '';
  position: absolute;
  top: 1px;
  left: 2px;
  width: 4px;
  height: 9px;
  background: repeating-linear-gradient(#161616 0 2px, transparent 2px 3px);
}

.sel.mono::before {
  background: #161616;
}

.sel.out select {
  padding-left: 10px;
}

.sel.out::before {
  content: '';
  position: absolute;
  top: 2px;
  left: 1px;
  width: 5px;
  height: 8px;
  background: linear-gradient(to right, transparent 2px, #2c2c2c 2px 3px, transparent 3px),
    linear-gradient(#d8b000 3px, #00e050 3px);
}

.io .second {
  margin-top: 5px;
}

.mon {
  display: flex;
  gap: 3px;
}

.mon button {
  height: 13px;
  width: 17px;
  border: 1px solid #161616;
  background: #444;
}

.mon button:last-child {
  width: 20px;
}

.mon .on {
  width: 27px;
}

.mon .on,
.post button {
  background: #ff9a33;
  color: #222;
}

.box {
  display: block;
  height: 13px;
  margin-top: 3px;
  border: 1px solid #161616;
}

/* sends */
.sends {
  height: 71px;
  display: flex;
  gap: 5px;
  padding: 3px 0 0 14px;
}

.sends p {
  height: 17px;
  line-height: 17px;
}

.send {
  position: relative;
  width: 28px;
  height: 33px;
}

.send span {
  position: absolute;
  top: 20px;
  left: 0;
  right: 0;
  line-height: 13px;
  text-align: center;
}

.master .sends {
  flex-direction: column;
  gap: 4px;
  padding: 3px 11px 0 1px;
}

.master .sends p {
  height: 5px;
  text-align: right;
}

.post {
  display: flex;
  align-items: center;
}

.post i {
  width: 12px;
  height: 1px;
  background: #8a8a8a;
}

.post.far i {
  width: 46px;
}

.post button {
  width: 26px;
  height: 13px;
  border: 1px solid #161616;
}

/* mixer strip */
.mixer {
  height: 120px;
  display: flex;
  padding: 6px 0 0 7px;
}

.master .mixer {
  padding-left: 11px;
}

.chain .mixer {
  padding-left: 4px;
}

.strip {
  width: 35px;
  display: flex;
  flex-direction: column;
  align-items: center;
}

.chain .strip {
  width: 22px;
}

.db {
  width: 35px;
  height: 13px;
  line-height: 11px;
  text-align: center;
  background: #2c2c2c;
  border: 1px solid #161616;
  border-radius: 7px;
}

.chain .db {
  width: 23px;
}

.pan-knob {
  margin-top: 3px;
}

.num,
.sm {
  width: 23px;
  border: 1px solid #161616;
}

.num {
  height: 23px;
  margin-top: 1px;
  background: #ff9a33;
  color: #161616;
  font-size: 14px;
}

.sm {
  height: 13px;
  margin-top: 4px;
  background: #444;
}

.sm.pan {
  margin: 12px 0;
}

.armed {
  background: #ff4f4f;
  color: #161616;
  outline: 1px solid #dcdcdc;
}

.solo {
  width: 25px;
  height: 13px;
  margin-top: 11px;
  background: #a5a5a5;
  border: 1px solid #161616;
  color: #3a3a3a;
}

.cue {
  position: relative;
  margin-top: 2px;
}

.cue svg:last-child {
  position: absolute;
  left: 9px;
  bottom: -1px;
}

.fader {
  position: relative;
  width: 16px;
}

.thumb {
  position: absolute;
  left: 4px;
  border: solid transparent;
  border-width: 6px 0 6px 11px;
  border-left-color: #dcdcdc;
}

.dot {
  position: absolute;
  left: 8px;
  width: 7px;
  height: 7px;
  border: 1px solid #161616;
  border-radius: 4px;
  background: #ff4f4f;
}

.scale {
  position: relative;
  flex: 1;
  color: #a5a5a5;
}

.scale span {
  position: absolute;
  left: 3px;
  font-size: 10px;
  line-height: 12px;
}

.foot {
  height: 6px;
}

/* detail area */
.detail {
  height: 188px;
  display: flex;
  margin-top: 7px;
  padding: 0 9px 0 8px;
}

.help,
.fxdrop {
  background: #4f4f4f;
  border-radius: 3px;
  overflow: hidden;
}

.help {
  width: 231px;
}

.help h2 {
  height: 17px;
  padding-left: 5px;
  line-height: 17px;
  background: #696969;
}

.help p {
  padding: 3px 0 0 6px;
  line-height: 15px;
}

.midi-in {
  width: 9px;
  display: flex;
  flex-direction: column;
  gap: 2px;
  padding: 45px 0 0 3px;
}

.midi-in i {
  width: 3px;
  height: 3px;
  background: #1e1e1e;
}

.midi-in .o {
  background: #e08a2c;
}

.midi-in .c {
  background: #1fb7b0;
}

.chain-view {
  display: flex;
  gap: 2px;
  background: #292929;
  border-radius: 3px;
  overflow: hidden;
}

.device {
  background: #4f4f4f;
  border-bottom: 2px solid #557985;
}

.device header {
  height: 17px;
  display: flex;
  align-items: center;
  background: #557985;
}

.device h3 {
  color: #161616;
  font-weight: 500;
}

.power {
  width: 13px;
  height: 13px;
  border: 1px solid #222;
  border-radius: 7px;
  background: #ff9a33;
}

.round {
  display: flex;
  gap: 4px;
}

.rack {
  width: 479px;
  border-left: 2px solid #557985;
}

.rack header {
  padding-left: 2px;
}

.rack h3 {
  width: 129px;
  padding-left: 4px;
}

.rand,
.map {
  height: 13px;
  border: 1px solid #161616;
  background: #3a3a3a;
}

.rand {
  width: 31px;
  border-radius: 7px;
  margin: 0 4px;
}

.map {
  width: 25px;
}

.rack .round {
  margin-left: auto;
  padding-right: 3px;
}

.rack-body {
  display: flex;
  padding: 4px 0 0 2px;
}

.rack-side {
  width: 17px;
  height: 160px;
  display: flex;
  flex-direction: column;
  gap: 4px;
}

.rack-side .last {
  margin-top: auto;
}

.macros {
  display: grid;
  grid-template-columns: repeat(4, 50px);
  gap: 2px;
}

.macro {
  height: 80px;
  display: flex;
  flex-direction: column;
  align-items: center;
  border: 1px solid #292929;
  border-radius: 2px;
}

.mname {
  width: 100%;
  height: 28px;
  margin-bottom: 7px;
  padding: 3px 0 0;
  line-height: 11px;
  text-align: center;
  color: #161616;
  font-weight: 400;
}

.mname.light {
  background: #cdcdcd;
}

.mname.grey {
  background: #a5a5a5;
}

.mname.dark {
  background: #3a3a3a;
  color: #fff;
  font-weight: 500;
}

.mname.mid {
  margin-right: 0;
  background: #7b7b7b;
}

.mval {
  margin-top: -3px;
  line-height: 12px;
  white-space: nowrap;
}

.overview {
  position: relative;
  display: grid;
  grid-template-columns: repeat(4, 4px);
  grid-auto-rows: 4px;
  gap: 1px;
  align-content: start;
  margin: 1px 3px 0 7px;
}

.overview i {
  background: #696969;
}

.overview .used {
  background: #a5a5a5;
}

.overview .cur {
  background: #e0e0e0;
}

.overview .hit {
  background: #ff9a33;
}

.frame {
  position: absolute;
  top: 94px;
  left: -1px;
  width: 21px;
  height: 21px;
  border: 1px solid #161616;
}

.pads {
  display: grid;
  grid-template-columns: repeat(4, 52px);
  gap: 2px 3px;
}

.pad {
  height: 39px;
  border: 1px solid #292929;
  border-radius: 2px;
  overflow: hidden;
}

.pname {
  height: 23px;
  padding: 2px 0 0;
  line-height: 10px;
  text-align: center;
  background: #e0e0e0;
  color: #161616;
  font-weight: 400;
}

.active .pname {
  background: #557985;
}

.pbtns {
  display: flex;
  height: 14px;
  border-top: 1px solid #292929;
}

.pbtns button {
  flex: 1;
}

.pbtns .pp {
  border: solid #292929;
  border-width: 0 1px;
  color: #8a8a8a;
}

.active .pp {
  color: #ff9a33;
}

/* simpler */
.simpler {
  width: 718px;
}

.simpler header {
  gap: 3px;
  padding: 0 3px;
}

.simpler h3 {
  flex: 1;
  padding-left: 1px;
}

.tab {
  width: 51px;
  height: 13px;
  background: #4a4a4a;
  border-radius: 2px;
}

.tab.on {
  width: 48px;
  height: 15px;
  align-self: flex-end;
  background: #4f4f4f;
  border-radius: 3px 3px 0 0;
}

.simpler .round {
  gap: 3px;
  margin-left: 2px;
}

.sampler {
  display: flex;
  height: 126px;
  margin: 3px 3px 0;
  background: #1e1e1e;
  border-radius: 2px;
}

.modes {
  width: 41px;
  display: flex;
  flex-direction: column;
}

.modes button {
  flex: 1;
  flex-direction: column;
  gap: 4px;
  color: #a5a5a5;
  font-weight: 400;
  border-right: 1px solid #555;
}

.modes .on {
  color: #ff9a33;
  border: solid #555;
  border-width: 1px 0;
}

.sample {
  margin-left: 5px;
}

.waveform {
  margin-top: 4px;
}

.waveform text {
  font-size: 11px;
  fill: #9ac0c2;
  fill-opacity: 0.65;
}

.controls {
  display: flex;
  align-items: flex-start;
  padding-top: 4px;
}

.gain {
  width: 46px;
  padding-left: 1px;
  color: #a5a5a5;
}

.gain span,
.gain b {
  display: block;
  height: 15px;
  line-height: 12px;
  font-weight: 500;
}

.gain b {
  padding-left: 2px;
  color: #00c3d8;
}

.trig {
  width: 43px;
  border: 1px solid #00c3d8;
}

.trig button,
.snap,
.wbtn {
  width: 100%;
  height: 12px;
  font-family: 'DejaVu Sans', sans-serif;
  font-size: 8px;
  font-weight: 400;
  color: #00c3d8;
}

.trig .on,
.snap {
  background: #00c3d8;
  color: #161616;
}

.snap {
  width: 38px;
  height: 11px;
  margin: 7px 0 0 11px;
}

.warp {
  display: grid;
  grid-template-columns: 54px 21px 53px;
  row-gap: 2px;
  align-items: center;
  margin-left: auto;
  margin-right: 4px;
  text-align: center;
  color: #a5a5a5;
}

.wbtn {
  height: 11px;
  border: 1px solid #ff9a33;
  color: #ff9a33;
}

.pill {
  height: 13px;
  flex: 1;
  border: 1px solid #666;
  border-radius: 7px;
}

.beat {
  color: #ff9a33;
}

.beats {
  grid-column: span 2;
  display: flex;
  align-items: center;
  gap: 17px;
  padding-left: 2px;
}

.halves {
  display: flex;
  gap: 2px;
}

.params {
  display: flex;
  height: 40px;
  padding-left: 5px;
}

.pair {
  padding-top: 5px;
}

.pair label {
  display: flex;
  align-items: center;
  gap: 3px;
}

.pair input {
  appearance: none;
  width: 13px;
  height: 13px;
  border: 1px solid #161616;
  background: #444;
}

.pair .sel {
  background: #444;
}

.filt {
  width: 47px;
}

.selects {
  width: 40px;
}

.selects .sel + .sel {
  margin-top: 6px;
}

.param > span {
  display: block;
  height: 16px;
  line-height: 17px;
  white-space: nowrap;
}

.freq {
  width: 57px;
  margin-left: 8px;
}

.res {
  width: 109px;
}

.lfo,
.rate {
  padding-top: 6px;
}

.lfo {
  width: 62px;
  margin-right: 14px;
  padding-left: 18px;
  border-left: 1px solid #3a3a3a;
}

.lfo .sel {
  width: 43px;
  margin-top: 4px;
}

.rate > div {
  display: flex;
  gap: 4px;
}

.rate {
  width: 67px;
}

.rate button {
  width: 24px;
  height: 13px;
  border: 1px solid #161616;
  background: #444;
  color: #999;
}

.rate .hz {
  background: #a5a5a5;
  color: #3a3a3a;
}

.rate .box {
  width: 52px;
  margin-top: 4px;
}

.ends {
  display: flex;
  padding-left: 9px;
  border-left: 1px solid #3a3a3a;
}

.ends .param {
  width: 60px;
}

.ends .param div {
  display: flex;
  height: 24px;
}

.ends b {
  align-self: flex-end;
  margin-left: -7px;
  line-height: 11px;
  font-weight: 500;
  white-space: nowrap;
}

.tail {
  width: 16px;
  border-right: 2px solid #557985;
}

.out-meter {
  margin: 40px 2px 0;
}

.fxdrop {
  flex: 1;
  display: flex;
  align-items: center;
  justify-content: center;
}

/* status bar */
.statusbar {
  height: 19px;
  display: flex;
  align-items: center;
  margin: 9px 12px 8px 10px;
}

.msg,
.clipbar,
.devbar {
  height: 19px;
  display: flex;
  align-items: center;
  background: #4f4f4f;
  border-radius: 2px;
}

.msg {
  flex: 1;
  margin: 0 9px 0 16px;
  padding-left: 6px;
  white-space: pre-wrap;
}

.msg a {
  color: inherit;
}

.clipbar {
  width: 220px;
  margin-right: 9px;
}

.clipbar button {
  width: 20px;
  height: 19px;
  border-right: 1px solid #292929;
}

.devbar button {
  width: 19px;
  height: 19px;
  margin-right: 1px;
  background: #ff9a33;
  color: #161616;
  border-radius: 2px;
}

.devbar span {
  width: 67px;
  text-align: center;
}

.mixbtn {
  margin-left: 17px;
  color: #ff9a33;
}

.mixcaret {
  margin-left: 5px;
  color: #222;
}
</style>
